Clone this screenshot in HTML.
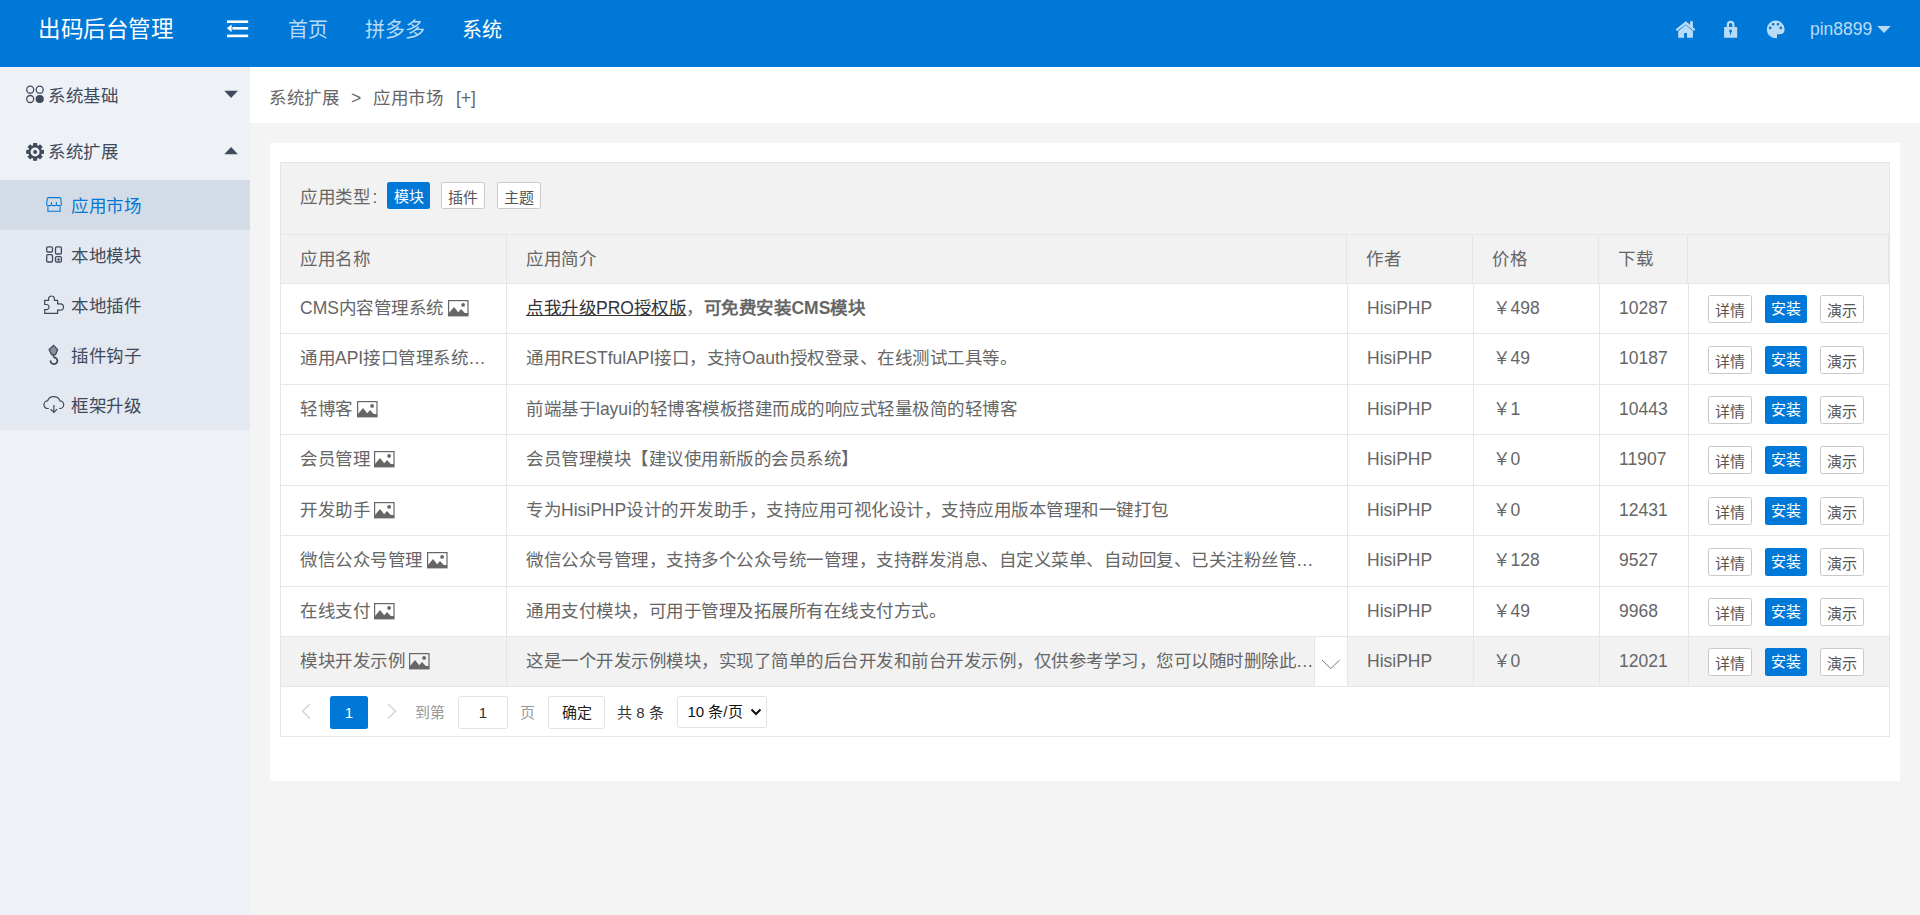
<!DOCTYPE html><html lang="zh-CN"><head><meta charset="utf-8"><style>
*{margin:0;padding:0;box-sizing:border-box}
html,body{text-spacing-trim:space-all;width:1920px;height:915px;overflow:hidden;background:#f4f4f4;font-family:"Liberation Sans",sans-serif;color:#666}
.abs{position:absolute;white-space:nowrap}
.t{position:absolute;white-space:nowrap;line-height:1}
svg{position:absolute;display:block;overflow:visible}
</style></head><body>

<div class="abs" style="left:0px;top:0px;width:1920px;height:67px;background:#0078d7;"></div>
<div class="t" style="left:38px;top:19px;font-size:22.5px;color:#fff;font-weight:500"><span style="letter-spacing:-0.50px">出码后台管理</span></div>
<svg style="left:226px;top:19px" width="24" height="20" viewBox="0 0 24 20">
<rect x="1" y="1.4" width="21.2" height="2.6" fill="#fff"/>
<rect x="6.4" y="8" width="15.8" height="2.6" fill="#fff"/>
<rect x="1" y="15.6" width="21.2" height="2.6" fill="#fff"/>
<path d="M0.8 9.3 L5.6 5.6 L5.6 13 Z" fill="#fff"/>
</svg>
<div class="t" style="left:287.5px;top:19.5px;font-size:20px;color:#b9dbf6;">首页</div>
<div class="t" style="left:364.5px;top:19.5px;font-size:20px;color:#b9dbf6;">拼多多</div>
<div class="t" style="left:462px;top:19.5px;font-size:20px;color:#fff;">系统</div>
<svg style="left:1670px;top:14px" width="30" height="30" viewBox="0 0 30 30">
<path d="M5.5 15.6 L15.8 7.2 L20.1 10.7 L20.1 7.2 L22.9 7.2 L22.9 13 L25.4 15.6 L24 17.1 L15.8 10.4 L7 17.1 Z" fill="#b9dbf6"/>
<path d="M8.2 17.2 L15.8 11 L22.9 17 L22.9 23.8 L17 23.8 L17 19.1 L14.1 19.1 L14.1 23.8 L8.2 23.8 Z" fill="#b9dbf6"/>
</svg>
<svg style="left:1670px;top:14px" width="70" height="30" viewBox="0 0 70 30">
<path d="M56.8 12.9 L56.8 10.5 A3.85 3.85 0 0 1 64.5 10.5 L64.5 12.9 L62.3 12.9 L62.3 10.7 A1.65 1.65 0 0 0 59 10.7 L59 12.9 Z" fill="#b9dbf6"/>
<path d="M54.1 12.9 L67.2 12.9 L67.2 23.8 L54.1 23.8 Z M60.6 15.6 A1.4 1.4 0 0 0 59.9 18.2 L60.2 20.7 L61 20.7 L61.3 18.2 A1.4 1.4 0 0 0 60.6 15.6 Z" fill="#b9dbf6" fill-rule="evenodd"/>
</svg>
<svg style="left:1760px;top:14px" width="30" height="30" viewBox="0 0 30 30">
<path d="M17 24.2 A8.9 8.9 0 1 1 24.6 15.7 C24.4 18.6 22.6 20.3 19.6 20.3 L17 20.3 Z M13.1 8.9 A1.35 1.35 0 1 0 13.1 11.6 A1.35 1.35 0 1 0 13.1 8.9 Z M18 8.9 A1.35 1.35 0 1 0 18 11.6 A1.35 1.35 0 1 0 18 8.9 Z M10.2 12.6 A1.35 1.35 0 1 0 10.2 15.3 A1.35 1.35 0 1 0 10.2 12.6 Z M20.8 12.6 A1.35 1.35 0 1 0 20.8 15.3 A1.35 1.35 0 1 0 20.8 12.6 Z" fill="#b9dbf6" fill-rule="evenodd"/>
</svg>
<div class="t" style="left:1810px;top:21px;font-size:17.5px;color:#b9dbf6;">pin8899</div>
<svg style="left:1877px;top:25px" width="14" height="9" viewBox="0 0 14 9"><path d="M0.2 1 L13.8 1 L7 8 Z" fill="#b9dbf6"/></svg>
<div class="abs" style="left:0px;top:67px;width:250px;height:848px;background:#eef1f6;"></div>
<div class="abs" style="left:0px;top:180px;width:250px;height:250px;background:#e4e8f1;"></div>
<div class="abs" style="left:0px;top:180px;width:250px;height:50px;background:#d3dce6;"></div>
<div class="t" style="left:48px;top:88px;font-size:17.5px;color:#3f4b5c;"><span style="letter-spacing:0.50px">系统基础</span></div>
<div class="t" style="left:48px;top:144px;font-size:17.5px;color:#3f4b5c;"><span style="letter-spacing:0.50px">系统扩展</span></div>
<div class="t" style="left:71px;top:198px;font-size:17.5px;color:#0078d7;"><span style="letter-spacing:0.50px">应用市场</span></div>
<div class="t" style="left:71px;top:248px;font-size:17.5px;color:#3f4b5c;"><span style="letter-spacing:0.50px">本地模块</span></div>
<div class="t" style="left:71px;top:298px;font-size:17.5px;color:#3f4b5c;"><span style="letter-spacing:0.50px">本地插件</span></div>
<div class="t" style="left:71px;top:348px;font-size:17.5px;color:#3f4b5c;"><span style="letter-spacing:0.50px">插件钩子</span></div>
<div class="t" style="left:71px;top:398px;font-size:17.5px;color:#3f4b5c;"><span style="letter-spacing:0.50px">框架升级</span></div>
<svg style="left:224px;top:90px" width="15" height="9" viewBox="0 0 15 9"><path d="M0.3 0.8 L13.9 0.8 L7.1 7.9 Z" fill="#3f4b5c"/></svg>
<svg style="left:224px;top:146px" width="15" height="9" viewBox="0 0 15 9"><path d="M0.3 8.2 L13.9 8.2 L7.1 1.1 Z" fill="#3f4b5c"/></svg>
<svg style="left:20px;top:80px" width="30" height="30" viewBox="0 0 30 30">
<circle cx="10.2" cy="9.7" r="3.5" fill="none" stroke="#3f4b5c" stroke-width="1.3"/>
<circle cx="19.7" cy="9.7" r="3.5" fill="none" stroke="#3f4b5c" stroke-width="1.3"/>
<circle cx="10.2" cy="19" r="3.5" fill="none" stroke="#3f4b5c" stroke-width="1.3"/>
<circle cx="19.7" cy="19" r="4.1" fill="#3f4b5c"/>
</svg>
<svg style="left:20px;top:136px" width="30" height="30" viewBox="0 0 30 30"><rect x="13.1" y="7" width="4" height="4" transform="rotate(0 15.1 15.9)" fill="#3f4b5c"/><rect x="13.1" y="7" width="4" height="4" transform="rotate(45 15.1 15.9)" fill="#3f4b5c"/><rect x="13.1" y="7" width="4" height="4" transform="rotate(90 15.1 15.9)" fill="#3f4b5c"/><rect x="13.1" y="7" width="4" height="4" transform="rotate(135 15.1 15.9)" fill="#3f4b5c"/><rect x="13.1" y="7" width="4" height="4" transform="rotate(180 15.1 15.9)" fill="#3f4b5c"/><rect x="13.1" y="7" width="4" height="4" transform="rotate(225 15.1 15.9)" fill="#3f4b5c"/><rect x="13.1" y="7" width="4" height="4" transform="rotate(270 15.1 15.9)" fill="#3f4b5c"/><rect x="13.1" y="7" width="4" height="4" transform="rotate(315 15.1 15.9)" fill="#3f4b5c"/>
<circle cx="15.1" cy="15.9" r="6.8" fill="#3f4b5c"/>
<circle cx="15.1" cy="15.9" r="4.5" fill="#eef1f6"/>
<circle cx="15.1" cy="15.9" r="2" fill="#3f4b5c"/>
</svg>
<svg style="left:40px;top:190px" width="30" height="30" viewBox="0 0 30 30" fill="none" stroke="#0078d7" stroke-width="1.05">
<path d="M8.3 7.6 L19.8 7.6 Q20.6 7.7 20.8 8.6 L21.4 14.2 Q21.4 15.6 20 15.6 L17.8 15.6 Q16.4 15.6 16.4 14.3 Q16.4 15.6 15 15.6 L12.9 15.6 Q11.5 15.6 11.5 14.3 Q11.5 15.6 10.1 15.6 L8 15.6 Q6.5 15.6 6.6 14.2 L7.3 8.6 Q7.5 7.7 8.3 7.6 Z"/>
<path d="M11.5 12.1 L11.5 14.3 M16.4 12.1 L16.4 14.3"/>
<path d="M7.9 16.6 L7.9 21.2 L20.1 21.2 L20.1 16.6"/>
</svg>
<svg style="left:40px;top:240px" width="30" height="30" viewBox="0 0 30 30" fill="none" stroke="#3f4b5c" stroke-width="1.3">
<rect x="6.7" y="6.8" width="5.8" height="5.2" rx="1.2"/>
<rect x="15.5" y="6.8" width="5.9" height="7.2" rx="1.2"/>
<rect x="6.7" y="14.7" width="5.8" height="7.3" rx="1.2"/>
<rect x="15.5" y="16.6" width="5.9" height="5.4" rx="1.2"/>
<path d="M18.5 18.2 L19.8 19.5 L18.5 20.8 L17.2 19.5 Z" fill="#3f4b5c" stroke-width="0.6"/>
</svg>
<svg style="left:40px;top:290px" width="30" height="30" viewBox="0 0 30 30" fill="none" stroke="#3f4b5c" stroke-width="1.2">
<path d="M4.7 23.3 L4.7 19.6 L7 19.6 A2.6 2.6 0 0 0 7 14.5 L4.7 14.5 L4.7 10.4 L8.6 10.4 L8.6 8 A3.1 3.1 0 0 1 14.4 8 L14.4 10.4 L17.6 10.4 L17.6 13.8 L20.3 13.8 A3.2 3.2 0 0 1 20.3 20.2 L17.6 20.2 L17.6 23.3 Z"/>
</svg>
<svg style="left:40px;top:340px" width="30" height="30" viewBox="0 0 30 30" fill="none" stroke="#3f4b5c">
<path d="M13.6 5.4 L17.6 9.6 L15.6 14.6 L11.6 14.6 L9.1 9.6 Z" fill="#3f4b5c" fill-opacity="0.55" stroke-width="1.3"/>
<path d="M13.5 14.8 L13.5 17.3" stroke-width="1.6"/>
<path d="M13.6 17.4 A3.4 3.4 0 1 1 10.6 20.3" stroke-width="1.8"/>
</svg>
<svg style="left:40px;top:390px" width="30" height="30" viewBox="0 0 30 30" fill="none" stroke="#3f4b5c" stroke-width="1.2">
<path d="M8.8 18.5 L7.8 18.5 A3.8 3.8 0 0 1 7.6 10.9 A6.3 5.5 0 0 1 19.9 10.9 A3.8 3.8 0 0 1 19.9 18.5 L19.1 18.5"/>
<path d="M13.9 15 L13.9 22.3 M10.6 19.2 L13.9 22.4 L17.1 19.2"/>
</svg>
<div class="abs" style="left:250px;top:67px;width:1670px;height:56px;background:#fff;"></div>
<div class="t" style="left:269px;top:89.5px;font-size:17.5px;color:#666;"><span style="letter-spacing:0.50px">系统扩展</span></div>
<div class="t" style="left:351px;top:89.5px;font-size:17.5px;color:#666;">&gt;</div>
<div class="t" style="left:373px;top:89.5px;font-size:17.5px;color:#666;"><span style="letter-spacing:0.50px">应用市场</span></div>
<div class="t" style="left:456px;top:89.5px;font-size:17.5px;color:#666;">[+]</div>
<div class="abs" style="left:270px;top:143px;width:1630px;height:638px;background:#fff;"></div>
<div class="abs" style="left:280px;top:162px;width:1610px;height:575px;border:1px solid #e6e6e6"></div>
<div class="abs" style="left:281px;top:163px;width:1608px;height:71px;background:#f2f2f2;"></div>
<div class="abs" style="left:281px;top:234px;width:1608px;height:1px;background:#e6e6e6;"></div>
<div class="abs" style="left:281px;top:235px;width:1608px;height:48px;background:#f2f2f2;"></div>
<div class="abs" style="left:281px;top:283px;width:1608px;height:1px;background:#e6e6e6;"></div>
<div class="abs" style="left:506px;top:235px;width:1px;height:48px;background:#e6e6e6;"></div>
<div class="abs" style="left:1346px;top:235px;width:1px;height:48px;background:#e6e6e6;"></div>
<div class="abs" style="left:1472px;top:235px;width:1px;height:48px;background:#e6e6e6;"></div>
<div class="abs" style="left:1598px;top:235px;width:1px;height:48px;background:#e6e6e6;"></div>
<div class="abs" style="left:1687px;top:235px;width:1px;height:48px;background:#e6e6e6;"></div>
<div class="abs" style="left:1888px;top:235px;width:1px;height:48px;background:#e6e6e6;"></div>
<div class="abs" style="left:281px;top:333px;width:1608px;height:1px;background:#e6e6e6;"></div>
<div class="abs" style="left:281px;top:384px;width:1608px;height:1px;background:#e6e6e6;"></div>
<div class="abs" style="left:281px;top:434px;width:1608px;height:1px;background:#e6e6e6;"></div>
<div class="abs" style="left:281px;top:485px;width:1608px;height:1px;background:#e6e6e6;"></div>
<div class="abs" style="left:281px;top:535px;width:1608px;height:1px;background:#e6e6e6;"></div>
<div class="abs" style="left:281px;top:586px;width:1608px;height:1px;background:#e6e6e6;"></div>
<div class="abs" style="left:281px;top:636px;width:1608px;height:1px;background:#e6e6e6;"></div>
<div class="abs" style="left:281px;top:637px;width:1608px;height:49px;background:#f2f2f2;"></div>
<div class="abs" style="left:281px;top:686px;width:1608px;height:1px;background:#e6e6e6;"></div>
<div class="abs" style="left:506px;top:284px;width:1px;height:402px;background:#e6e6e6;"></div>
<div class="abs" style="left:1347px;top:284px;width:1px;height:402px;background:#e6e6e6;"></div>
<div class="abs" style="left:1473px;top:284px;width:1px;height:402px;background:#e6e6e6;"></div>
<div class="abs" style="left:1599px;top:284px;width:1px;height:402px;background:#e6e6e6;"></div>
<div class="abs" style="left:1688px;top:284px;width:1px;height:402px;background:#e6e6e6;"></div>
<div class="abs" style="left:1314px;top:637px;width:33px;height:49px;background:#fff;"></div>
<div class="abs" style="left:1314px;top:637px;width:1px;height:49px;background:#e6e6e6;"></div>
<svg style="left:1321px;top:659px" width="20" height="11" viewBox="0 0 20 11"><path d="M1 1 L9.8 9.6 L18.6 1" fill="none" stroke="#777" stroke-width="1"/></svg>
<div class="t" style="left:300px;top:188.5px;font-size:17.5px;color:#666;"><span style="letter-spacing:0.50px">应用类型</span><span style="margin-left:2.5px">:</span></div>
<div class="abs" style="left:387px;top:182px;width:43px;height:27px;background:#0078d7;border-radius:2.5px;color:#fff;font-size:15px;line-height:27px;text-align:center;padding-top:0.5px">模块</div>
<div class="abs" style="left:441px;top:182px;width:44px;height:27px;background:#fff;border:1px solid #c9c9c9;border-radius:2.5px;color:#555;font-size:15px;line-height:25px;text-align:center;padding-top:1.5px">插件</div>
<div class="abs" style="left:497px;top:182px;width:44px;height:27px;background:#fff;border:1px solid #c9c9c9;border-radius:2.5px;color:#555;font-size:15px;line-height:25px;text-align:center;padding-top:1.5px">主题</div>
<div class="t" style="left:300px;top:251px;font-size:17.5px;color:#666;"><span style="letter-spacing:0.50px">应用名称</span></div>
<div class="t" style="left:526px;top:251px;font-size:17.5px;color:#666;"><span style="letter-spacing:0.50px">应用简介</span></div>
<div class="t" style="left:1366px;top:251px;font-size:17.5px;color:#666;"><span style="letter-spacing:0.50px">作者</span></div>
<div class="t" style="left:1492px;top:251px;font-size:17.5px;color:#666;"><span style="letter-spacing:0.50px">价格</span></div>
<div class="t" style="left:1618px;top:251px;font-size:17.5px;color:#666;"><span style="letter-spacing:0.50px">下载</span></div>
<div class="t" style="left:300px;top:299.5px;font-size:17.5px;color:#666">CMS<span style="letter-spacing:0.50px">内容管理系统</span><svg style="position:relative;display:inline-block;vertical-align:top;margin-left:4px;top:0px" width="21" height="17" viewBox="0 0 21 17"><rect x="0.6" y="0.6" width="19.4" height="15.2" fill="none" stroke="#666" stroke-width="1.2"/><path d="M1 13 L6 7 L10.2 12.3 L13 9.1 L16.8 13 L20 13 L20 16 L1 16 Z" fill="#666"/><circle cx="15.1" cy="4.9" r="1.9" fill="#666"/></svg></div>
<div class="t" style="left:526px;top:299.5px;font-size:17.5px;color:#666;"><u style="color:#333"><span style="letter-spacing:0.50px">点我升级</span>PRO<span style="letter-spacing:0.50px">授权版</span></u><span style="letter-spacing:0.50px">，</span><b><span style="letter-spacing:0.50px">可免费安装</span>CMS<span style="letter-spacing:0.50px">模块</span></b></div>
<div class="t" style="left:1367px;top:299.5px;font-size:17.5px;color:#666;">HisiPHP</div>
<div class="t" style="left:1493px;top:299.5px;font-size:17.5px;color:#666;"><span style="letter-spacing:0.50px">￥</span>498</div>
<div class="t" style="left:1619px;top:299.5px;font-size:17.5px;color:#666;">10287</div>
<div class="abs" style="left:1708px;top:295px;width:44px;height:28px;background:#fff;border:1px solid #c9c9c9;border-radius:2.5px;color:#555;font-size:15px;line-height:26px;text-align:center;padding-top:2px">详情</div>
<div class="abs" style="left:1765px;top:295px;width:42px;height:28px;background:#0078d7;border-radius:2.5px;color:#fff;font-size:15px;line-height:28px;text-align:center;padding-top:0px">安装</div>
<div class="abs" style="left:1820px;top:295px;width:44px;height:28px;background:#fff;border:1px solid #c9c9c9;border-radius:2.5px;color:#555;font-size:15px;line-height:26px;text-align:center;padding-top:2px">演示</div>
<div class="t" style="left:300px;top:350.0px;font-size:17.5px;color:#666"><span style="letter-spacing:0.50px">通用</span>API<span style="letter-spacing:0.50px">接口管理系统</span>…</div>
<div class="t" style="left:526px;top:350.0px;font-size:17.5px;color:#666;"><span style="letter-spacing:0.50px">通用</span>RESTfulAPI<span style="letter-spacing:0.50px">接口，支持</span>Oauth<span style="letter-spacing:0.50px">授权登录、在线测试工具等。</span></div>
<div class="t" style="left:1367px;top:350.0px;font-size:17.5px;color:#666;">HisiPHP</div>
<div class="t" style="left:1493px;top:350.0px;font-size:17.5px;color:#666;"><span style="letter-spacing:0.50px">￥</span>49</div>
<div class="t" style="left:1619px;top:350.0px;font-size:17.5px;color:#666;">10187</div>
<div class="abs" style="left:1708px;top:346px;width:44px;height:28px;background:#fff;border:1px solid #c9c9c9;border-radius:2.5px;color:#555;font-size:15px;line-height:26px;text-align:center;padding-top:2px">详情</div>
<div class="abs" style="left:1765px;top:346px;width:42px;height:28px;background:#0078d7;border-radius:2.5px;color:#fff;font-size:15px;line-height:28px;text-align:center;padding-top:0px">安装</div>
<div class="abs" style="left:1820px;top:346px;width:44px;height:28px;background:#fff;border:1px solid #c9c9c9;border-radius:2.5px;color:#555;font-size:15px;line-height:26px;text-align:center;padding-top:2px">演示</div>
<div class="t" style="left:300px;top:400.5px;font-size:17.5px;color:#666"><span style="letter-spacing:0.50px">轻博客</span><svg style="position:relative;display:inline-block;vertical-align:top;margin-left:4px;top:0px" width="21" height="17" viewBox="0 0 21 17"><rect x="0.6" y="0.6" width="19.4" height="15.2" fill="none" stroke="#666" stroke-width="1.2"/><path d="M1 13 L6 7 L10.2 12.3 L13 9.1 L16.8 13 L20 13 L20 16 L1 16 Z" fill="#666"/><circle cx="15.1" cy="4.9" r="1.9" fill="#666"/></svg></div>
<div class="t" style="left:526px;top:400.5px;font-size:17.5px;color:#666;"><span style="letter-spacing:0.50px">前端基于</span>layui<span style="letter-spacing:0.50px">的轻博客模板搭建而成的响应式轻量极简的轻博客</span></div>
<div class="t" style="left:1367px;top:400.5px;font-size:17.5px;color:#666;">HisiPHP</div>
<div class="t" style="left:1493px;top:400.5px;font-size:17.5px;color:#666;"><span style="letter-spacing:0.50px">￥</span>1</div>
<div class="t" style="left:1619px;top:400.5px;font-size:17.5px;color:#666;">10443</div>
<div class="abs" style="left:1708px;top:396px;width:44px;height:28px;background:#fff;border:1px solid #c9c9c9;border-radius:2.5px;color:#555;font-size:15px;line-height:26px;text-align:center;padding-top:2px">详情</div>
<div class="abs" style="left:1765px;top:396px;width:42px;height:28px;background:#0078d7;border-radius:2.5px;color:#fff;font-size:15px;line-height:28px;text-align:center;padding-top:0px">安装</div>
<div class="abs" style="left:1820px;top:396px;width:44px;height:28px;background:#fff;border:1px solid #c9c9c9;border-radius:2.5px;color:#555;font-size:15px;line-height:26px;text-align:center;padding-top:2px">演示</div>
<div class="t" style="left:300px;top:451.0px;font-size:17.5px;color:#666"><span style="letter-spacing:0.50px">会员管理</span><svg style="position:relative;display:inline-block;vertical-align:top;margin-left:4px;top:0px" width="21" height="17" viewBox="0 0 21 17"><rect x="0.6" y="0.6" width="19.4" height="15.2" fill="none" stroke="#666" stroke-width="1.2"/><path d="M1 13 L6 7 L10.2 12.3 L13 9.1 L16.8 13 L20 13 L20 16 L1 16 Z" fill="#666"/><circle cx="15.1" cy="4.9" r="1.9" fill="#666"/></svg></div>
<div class="t" style="left:526px;top:451.0px;font-size:17.5px;color:#666;"><span style="letter-spacing:0.50px">会员管理模块【建议使用新版的会员系统】</span></div>
<div class="t" style="left:1367px;top:451.0px;font-size:17.5px;color:#666;">HisiPHP</div>
<div class="t" style="left:1493px;top:451.0px;font-size:17.5px;color:#666;"><span style="letter-spacing:0.50px">￥</span>0</div>
<div class="t" style="left:1619px;top:451.0px;font-size:17.5px;color:#666;">11907</div>
<div class="abs" style="left:1708px;top:446px;width:44px;height:28px;background:#fff;border:1px solid #c9c9c9;border-radius:2.5px;color:#555;font-size:15px;line-height:26px;text-align:center;padding-top:2px">详情</div>
<div class="abs" style="left:1765px;top:446px;width:42px;height:28px;background:#0078d7;border-radius:2.5px;color:#fff;font-size:15px;line-height:28px;text-align:center;padding-top:0px">安装</div>
<div class="abs" style="left:1820px;top:446px;width:44px;height:28px;background:#fff;border:1px solid #c9c9c9;border-radius:2.5px;color:#555;font-size:15px;line-height:26px;text-align:center;padding-top:2px">演示</div>
<div class="t" style="left:300px;top:501.5px;font-size:17.5px;color:#666"><span style="letter-spacing:0.50px">开发助手</span><svg style="position:relative;display:inline-block;vertical-align:top;margin-left:4px;top:0px" width="21" height="17" viewBox="0 0 21 17"><rect x="0.6" y="0.6" width="19.4" height="15.2" fill="none" stroke="#666" stroke-width="1.2"/><path d="M1 13 L6 7 L10.2 12.3 L13 9.1 L16.8 13 L20 13 L20 16 L1 16 Z" fill="#666"/><circle cx="15.1" cy="4.9" r="1.9" fill="#666"/></svg></div>
<div class="t" style="left:526px;top:501.5px;font-size:17.5px;color:#666;"><span style="letter-spacing:0.50px">专为</span>HisiPHP<span style="letter-spacing:0.50px">设计的开发助手，支持应用可视化设计，支持应用版本管理和一键打包</span></div>
<div class="t" style="left:1367px;top:501.5px;font-size:17.5px;color:#666;">HisiPHP</div>
<div class="t" style="left:1493px;top:501.5px;font-size:17.5px;color:#666;"><span style="letter-spacing:0.50px">￥</span>0</div>
<div class="t" style="left:1619px;top:501.5px;font-size:17.5px;color:#666;">12431</div>
<div class="abs" style="left:1708px;top:497px;width:44px;height:28px;background:#fff;border:1px solid #c9c9c9;border-radius:2.5px;color:#555;font-size:15px;line-height:26px;text-align:center;padding-top:2px">详情</div>
<div class="abs" style="left:1765px;top:497px;width:42px;height:28px;background:#0078d7;border-radius:2.5px;color:#fff;font-size:15px;line-height:28px;text-align:center;padding-top:0px">安装</div>
<div class="abs" style="left:1820px;top:497px;width:44px;height:28px;background:#fff;border:1px solid #c9c9c9;border-radius:2.5px;color:#555;font-size:15px;line-height:26px;text-align:center;padding-top:2px">演示</div>
<div class="t" style="left:300px;top:552.0px;font-size:17.5px;color:#666"><span style="letter-spacing:0.50px">微信公众号管理</span><svg style="position:relative;display:inline-block;vertical-align:top;margin-left:4px;top:0px" width="21" height="17" viewBox="0 0 21 17"><rect x="0.6" y="0.6" width="19.4" height="15.2" fill="none" stroke="#666" stroke-width="1.2"/><path d="M1 13 L6 7 L10.2 12.3 L13 9.1 L16.8 13 L20 13 L20 16 L1 16 Z" fill="#666"/><circle cx="15.1" cy="4.9" r="1.9" fill="#666"/></svg></div>
<div class="t" style="left:526px;top:552.0px;font-size:17.5px;color:#666;"><span style="letter-spacing:0.50px">微信公众号管理，支持多个公众号统一管理，支持群发消息、自定义菜单、自动回复、已关注粉丝管</span>…</div>
<div class="t" style="left:1367px;top:552.0px;font-size:17.5px;color:#666;">HisiPHP</div>
<div class="t" style="left:1493px;top:552.0px;font-size:17.5px;color:#666;"><span style="letter-spacing:0.50px">￥</span>128</div>
<div class="t" style="left:1619px;top:552.0px;font-size:17.5px;color:#666;">9527</div>
<div class="abs" style="left:1708px;top:548px;width:44px;height:28px;background:#fff;border:1px solid #c9c9c9;border-radius:2.5px;color:#555;font-size:15px;line-height:26px;text-align:center;padding-top:2px">详情</div>
<div class="abs" style="left:1765px;top:548px;width:42px;height:28px;background:#0078d7;border-radius:2.5px;color:#fff;font-size:15px;line-height:28px;text-align:center;padding-top:0px">安装</div>
<div class="abs" style="left:1820px;top:548px;width:44px;height:28px;background:#fff;border:1px solid #c9c9c9;border-radius:2.5px;color:#555;font-size:15px;line-height:26px;text-align:center;padding-top:2px">演示</div>
<div class="t" style="left:300px;top:602.5px;font-size:17.5px;color:#666"><span style="letter-spacing:0.50px">在线支付</span><svg style="position:relative;display:inline-block;vertical-align:top;margin-left:4px;top:0px" width="21" height="17" viewBox="0 0 21 17"><rect x="0.6" y="0.6" width="19.4" height="15.2" fill="none" stroke="#666" stroke-width="1.2"/><path d="M1 13 L6 7 L10.2 12.3 L13 9.1 L16.8 13 L20 13 L20 16 L1 16 Z" fill="#666"/><circle cx="15.1" cy="4.9" r="1.9" fill="#666"/></svg></div>
<div class="t" style="left:526px;top:602.5px;font-size:17.5px;color:#666;"><span style="letter-spacing:0.50px">通用支付模块，可用于管理及拓展所有在线支付方式。</span></div>
<div class="t" style="left:1367px;top:602.5px;font-size:17.5px;color:#666;">HisiPHP</div>
<div class="t" style="left:1493px;top:602.5px;font-size:17.5px;color:#666;"><span style="letter-spacing:0.50px">￥</span>49</div>
<div class="t" style="left:1619px;top:602.5px;font-size:17.5px;color:#666;">9968</div>
<div class="abs" style="left:1708px;top:598px;width:44px;height:28px;background:#fff;border:1px solid #c9c9c9;border-radius:2.5px;color:#555;font-size:15px;line-height:26px;text-align:center;padding-top:2px">详情</div>
<div class="abs" style="left:1765px;top:598px;width:42px;height:28px;background:#0078d7;border-radius:2.5px;color:#fff;font-size:15px;line-height:28px;text-align:center;padding-top:0px">安装</div>
<div class="abs" style="left:1820px;top:598px;width:44px;height:28px;background:#fff;border:1px solid #c9c9c9;border-radius:2.5px;color:#555;font-size:15px;line-height:26px;text-align:center;padding-top:2px">演示</div>
<div class="t" style="left:300px;top:652.5px;font-size:17.5px;color:#666"><span style="letter-spacing:0.50px">模块开发示例</span><svg style="position:relative;display:inline-block;vertical-align:top;margin-left:4px;top:0px" width="21" height="17" viewBox="0 0 21 17"><rect x="0.6" y="0.6" width="19.4" height="15.2" fill="none" stroke="#666" stroke-width="1.2"/><path d="M1 13 L6 7 L10.2 12.3 L13 9.1 L16.8 13 L20 13 L20 16 L1 16 Z" fill="#666"/><circle cx="15.1" cy="4.9" r="1.9" fill="#666"/></svg></div>
<div class="t" style="left:526px;top:652.5px;font-size:17.5px;color:#666;"><span style="letter-spacing:0.50px">这是一个开发示例模块，实现了简单的后台开发和前台开发示例，仅供参考学习，您可以随时删除此</span>…</div>
<div class="t" style="left:1367px;top:652.5px;font-size:17.5px;color:#666;">HisiPHP</div>
<div class="t" style="left:1493px;top:652.5px;font-size:17.5px;color:#666;"><span style="letter-spacing:0.50px">￥</span>0</div>
<div class="t" style="left:1619px;top:652.5px;font-size:17.5px;color:#666;">12021</div>
<div class="abs" style="left:1708px;top:648px;width:44px;height:28px;background:#fff;border:1px solid #c9c9c9;border-radius:2.5px;color:#555;font-size:15px;line-height:26px;text-align:center;padding-top:2px">详情</div>
<div class="abs" style="left:1765px;top:648px;width:42px;height:28px;background:#0078d7;border-radius:2.5px;color:#fff;font-size:15px;line-height:28px;text-align:center;padding-top:0px">安装</div>
<div class="abs" style="left:1820px;top:648px;width:44px;height:28px;background:#fff;border:1px solid #c9c9c9;border-radius:2.5px;color:#555;font-size:15px;line-height:26px;text-align:center;padding-top:2px">演示</div>
<svg style="left:300px;top:703px" width="12" height="17" viewBox="0 0 12 17"><path d="M10 1 L2.5 8.2 L10 15.5" fill="none" stroke="#d2d2d2" stroke-width="1.3"/></svg>
<div class="abs" style="left:330px;top:696px;width:38px;height:33px;background:#0078d7;border-radius:2.5px;color:#fff;font-size:15px;line-height:33px;text-align:center">1</div>
<svg style="left:386px;top:703px" width="12" height="17" viewBox="0 0 12 17"><path d="M2 1 L9.5 8.2 L2 15.5" fill="none" stroke="#d2d2d2" stroke-width="1.3"/></svg>
<div class="t" style="left:415px;top:704.5px;font-size:15px;color:#999;">到第</div>
<div class="abs" style="left:458px;top:696px;width:50px;height:33px;background:#fff;border:1px solid #e2e2e2;border-radius:2.5px;color:#333;font-size:15px;line-height:31px;text-align:center">1</div>
<div class="t" style="left:520px;top:704.5px;font-size:15px;color:#999;">页</div>
<div class="abs" style="left:548px;top:696px;width:57px;height:33px;background:#fff;border:1px solid #e2e2e2;border-radius:2.5px;color:#222;font-size:15px;line-height:31px;text-align:center">确定</div>
<div class="t" style="left:617px;top:704.5px;font-size:15px;color:#333;">共 8 条</div>
<div class="abs" style="left:677px;top:696px;width:90px;height:32px;background:#fff;border:1px solid #e2e2e2;border-radius:2.5px;color:#111;font-size:15px;line-height:30px;padding-left:9.5px">10 条/页</div>
<svg style="left:750px;top:707px" width="12" height="10" viewBox="0 0 12 10"><path d="M1.5 2.5 L6 7 L10.5 2.5" fill="none" stroke="#111" stroke-width="2"/></svg>
</body></html>
